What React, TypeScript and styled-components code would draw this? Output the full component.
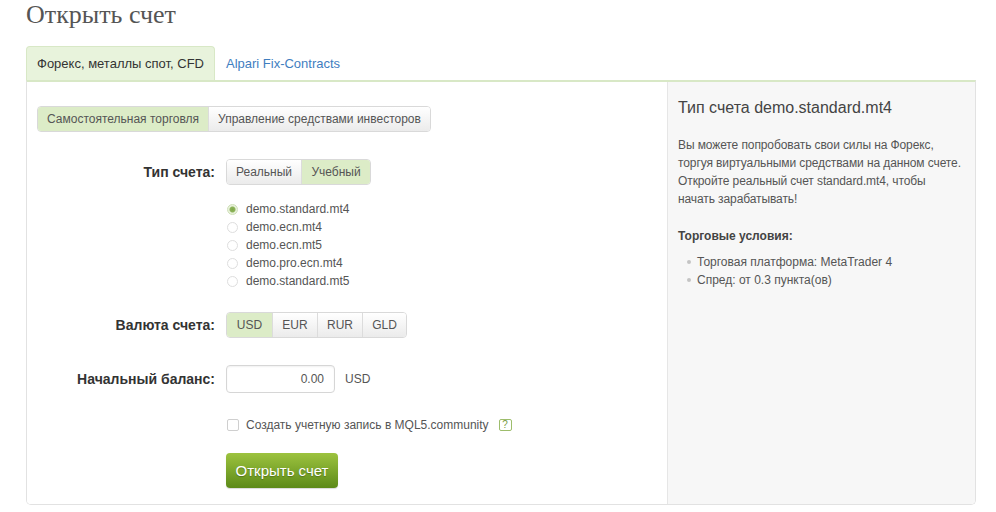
import React, { useState } from "react";
import styled, { createGlobalStyle } from "styled-components";

const Global = createGlobalStyle`
  html, body { margin: 0; padding: 0; background: #fff; }
  body { font-family: "Liberation Sans", Arial, sans-serif; color: #555; }
  * { box-sizing: border-box; }
`;

const Page = styled.div`
  width: 996px;
  height: 512px;
  padding: 0 20px 0 26px;
  overflow: hidden;
`;

const Title = styled.h1`
  margin: 0;
  height: 46px;
  padding-top: 1px;
  font-family: "Liberation Serif", Georgia, serif;
  font-weight: normal;
  font-size: 26px;
  line-height: 28px;
  color: #555;
`;

const Tabs = styled.div`
  display: flex;
  width: 950px;
  height: 34px;
  align-items: stretch;
`;

const Tab = styled.div<{ $active?: boolean }>`
  display: flex;
  align-items: center;
  padding: 0 10px;
  font-size: 13px;
  border: 1px solid ${(p) => (p.$active ? "#d8e8c6" : "transparent")};
  border-bottom: none;
  border-radius: 4px 4px 0 0;
  background: ${(p) => (p.$active ? "#e8f3dc" : "transparent")};
  color: ${(p) => (p.$active ? "#333" : "#3f7ebf")};
`;

const Card = styled.div`
  width: 950px;
  height: 425px;
  display: flex;
  border: 1px solid #e2e2e2;
  border-top: 2px solid #d8e8c6;
  border-radius: 0 0 5px 5px;
  overflow: hidden;
`;

const Left = styled.div`
  width: 640px;
  padding: 24px 0 0 10px;
  background: #fff;
`;

const Right = styled.div`
  flex: 1;
  background: #f7f7f7;
  border-left: 1px solid #e6e6e6;
  padding: 16px 10px 0 10px;
  overflow: hidden;
`;

const Segmented = styled.div`
  display: inline-flex;
  height: 26px;
  border: 1px solid #d9d9d9;
  border-radius: 4px;
  overflow: hidden;
`;

const Seg = styled.div<{ $active?: boolean; $w?: number }>`
  display: flex;
  align-items: center;
  justify-content: center;
  padding: 0 9px;
  ${(p) => (p.$w ? `width: ${p.$w}px;` : "")}
  font-size: 12px;
  color: #555;
  background: ${(p) =>
    p.$active ? "#dcecc7" : "linear-gradient(#ffffff, #ebebeb)"};
  & + & {
    border-left: 1px solid #dcdcdc;
  }
`;

const Row = styled.div<{ $mt: number }>`
  display: flex;
  align-items: center;
  margin-top: ${(p) => p.$mt}px;
`;

const Label = styled.div`
  width: 178px;
  text-align: right;
  font-size: 14px;
  font-weight: bold;
  color: #333;
  margin-right: 11px;
`;

const Indent = styled.div<{ $mt: number }>`
  margin-left: 189px;
  margin-top: ${(p) => p.$mt}px;
`;

const RadioRow = styled.label`
  display: flex;
  align-items: center;
  height: 18px;
  font-size: 12px;
  color: #555;
`;

const RadioDot = styled.span<{ $checked?: boolean }>`
  width: 11px;
  height: 11px;
  border-radius: 50%;
  margin: 0 8px 0 1px;
  border: 1px solid ${(p) => (p.$checked ? "#cfe0b8" : "#dedede")};
  background: ${(p) =>
    p.$checked
      ? "radial-gradient(circle, #7fa84a 0, #8db35a 2.5px, #e9f2dc 3.5px)"
      : "#fff"};
`;

const Input = styled.div`
  width: 109px;
  height: 28px;
  border: 1px solid #d6d6d6;
  border-radius: 4px;
  display: flex;
  align-items: center;
  justify-content: flex-end;
  padding-right: 10px;
  font-size: 12px;
  color: #555;
  box-shadow: inset 0 1px 2px rgba(0, 0, 0, 0.06);
`;

const Unit = styled.span`
  margin-left: 10px;
  font-size: 12px;
  color: #555;
`;

const Check = styled.span`
  width: 12px;
  height: 12px;
  border: 1px solid #cfcfcf;
  border-radius: 2px;
  margin: 0 7px 0 1px;
  background: #fff;
`;

const Help = styled.span`
  display: inline-flex;
  align-items: center;
  justify-content: center;
  width: 13px;
  height: 12px;
  margin-left: 10px;
  border: 1px solid #9dbd6c;
  border-radius: 2px;
  font-size: 10px;
  line-height: 10px;
  color: #7a9d45;
`;

const SubmitButton = styled.button`
  margin-top: 19px;
  margin-left: 189px;
  width: 112px;
  height: 35px;
  border: none;
  border-radius: 4px;
  background: linear-gradient(#9dc33f, #5c8a18);
  color: #fff;
  font-family: "Liberation Sans", Arial, sans-serif;
  font-size: 15px;
  text-shadow: 0 1px 1px rgba(0, 0, 0, 0.25);
  box-shadow: 0 1px 1px rgba(0, 0, 0, 0.15);
  padding: 0;
`;

const Heading = styled.div`
  font-size: 16px;
  line-height: 20px;
  color: #444;
`;

const Para = styled.p`
  margin: 18px 0 0;
  font-size: 12px;
  line-height: 18px;
  color: #555;
  white-space: nowrap;
  letter-spacing: -0.1px;
`;

const Sub = styled.div`
  margin-top: 19px;
  font-size: 12px;
  line-height: 18px;
  font-weight: bold;
  color: #444;
`;

const List = styled.ul`
  list-style: none;
  margin: 8px 0 0;
  padding: 0 0 0 9px;
`;

const Item = styled.li`
  position: relative;
  padding-left: 10px;
  font-size: 12px;
  line-height: 18px;
  color: #555;
  &::before {
    content: "";
    position: absolute;
    left: 0;
    top: 7px;
    width: 4px;
    height: 4px;
    border-radius: 50%;
    background: #c4c4c4;
  }
`;

const accounts = [
  "demo.standard.mt4",
  "demo.ecn.mt4",
  "demo.ecn.mt5",
  "demo.pro.ecn.mt4",
  "demo.standard.mt5",
];

export default function App() {
  const [acc] = useState(0);
  return (
    <Page>
      <Global />
      <Title>Открыть счет</Title>
      <Tabs>
        <Tab $active>Форекс, металлы спот, CFD</Tab>
        <Tab>Alpari Fix-Contracts</Tab>
      </Tabs>
      <Card>
        <Left>
          <Segmented>
            <Seg $active>Самостоятельная торговля</Seg>
            <Seg>Управление средствами инвесторов</Seg>
          </Segmented>
          <Row $mt={27}>
            <Label>Тип счета:</Label>
            <Segmented>
              <Seg $w={74}>Реальный</Seg>
              <Seg $w={69} $active>
                Учебный
              </Seg>
            </Segmented>
          </Row>
          <Indent $mt={15}>
            {accounts.map((a, i) => (
              <RadioRow key={a}>
                <RadioDot $checked={i === acc} />
                {a}
              </RadioRow>
            ))}
          </Indent>
          <Row $mt={22}>
            <Label>Валюта счета:</Label>
            <Segmented>
              <Seg $w={45} $active>
                USD
              </Seg>
              <Seg $w={45}>EUR</Seg>
              <Seg $w={45}>RUR</Seg>
              <Seg $w={44}>GLD</Seg>
            </Segmented>
          </Row>
          <Row $mt={27}>
            <Label>Начальный баланс:</Label>
            <Input>0.00</Input>
            <Unit>USD</Unit>
          </Row>
          <Indent $mt={23}>
            <RadioRow>
              <Check />
              Создать учетную запись в MQL5.community
              <Help>?</Help>
            </RadioRow>
          </Indent>
          <SubmitButton>Открыть счет</SubmitButton>
        </Left>
        <Right>
          <Heading>Тип счета demo.standard.mt4</Heading>
          <Para>
            Вы можете попробовать свои силы на Форекс,
            <br />
            торгуя виртуальными средствами на данном счете.
            <br />
            Откройте реальный счет standard.mt4, чтобы
            <br />
            начать зарабатывать!
          </Para>
          <Sub>Торговые условия:</Sub>
          <List>
            <Item>Торговая платформа: MetaTrader 4</Item>
            <Item>Спред: от 0.3 пункта(ов)</Item>
          </List>
        </Right>
      </Card>
    </Page>
  );
}
